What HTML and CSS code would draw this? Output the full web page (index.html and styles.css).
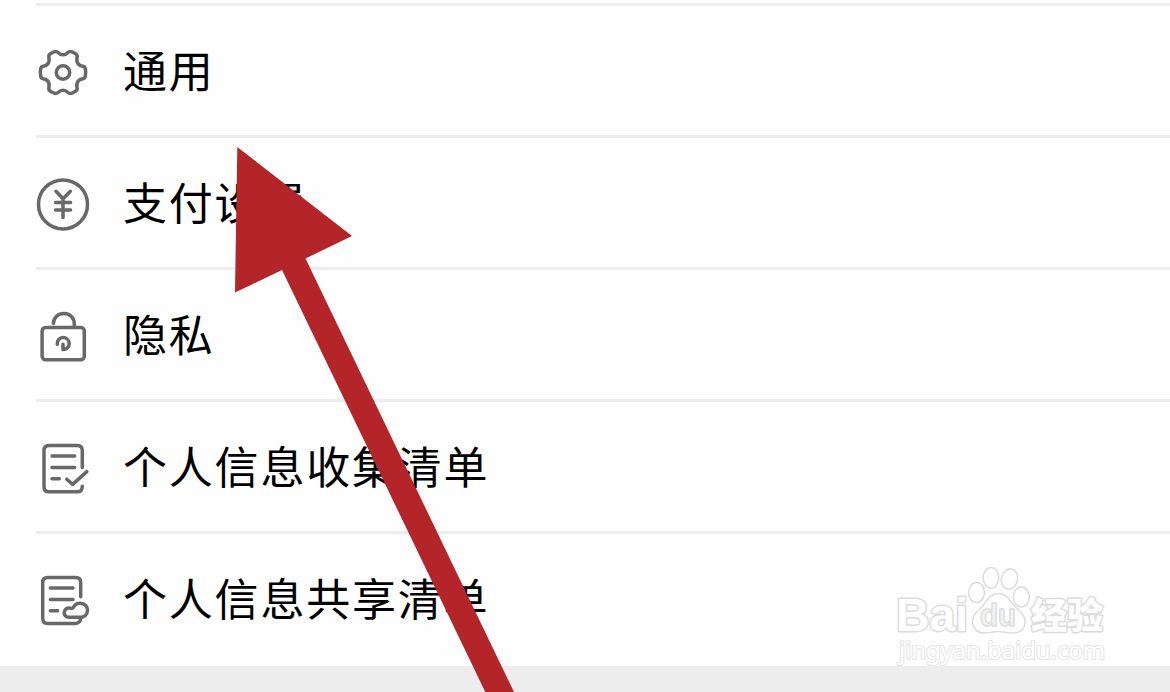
FILE: index.html
```html
<!DOCTYPE html>
<html lang="zh-CN">
<head>
    <meta charset="UTF-8">
    <meta name="viewport" content="width=device-width, initial-scale=1.0">
    <title>设置</title>
    <link rel="stylesheet" href="styles.css">
</head>
<body>
    <div class="page">
        <ul class="list">
            <li class="row">
                <svg class="icon" viewBox="0 0 60 60">
                    <path d="M31 12.8Q33.8 12.8 35.5 10.8Q37.8 8.7 40.3 10L43.6 11.8Q45.6 13 45.1 15.5Q44.1 19.5 46.3 22Q48.1 24 50.9 24.2Q52.9 24.5 53.3 26.7Q54.1 30.5 53.3 34.3Q52.9 36.5 50.9 36.8Q48.1 37 46.3 39Q44.1 41.5 45.1 45.5Q45.6 48 43.6 49.2L40.3 51Q37.8 52.3 35.5 50.2Q33.8 48.2 31 48.2Q28.2 48.2 26.5 50.2Q24.2 52.3 21.7 51L18.4 49.2Q16.4 48 16.9 45.5Q17.9 41.5 15.7 39Q13.9 37 11.1 36.8Q9.1 36.5 8.7 34.3Q7.9 30.5 8.7 26.7Q9.1 24.5 11.1 24.2Q13.9 24 15.7 22Q17.9 19.5 16.9 15.5Q16.4 13 18.4 11.8L21.7 10Q24.2 8.7 26.5 10.8Q28.2 12.8 31 12.8Z"/>
                    <circle cx="31" cy="30.5" r="6.7"/>
                </svg>
                <span class="label">通用</span>
            </li>
            <li class="row">
                <svg class="icon" viewBox="0 0 60 60">
                    <circle cx="31" cy="30.4" r="24.5"/>
                    <path d="M24 17.3L31 24.8L38.3 17.3M31 24.8V43.6M23.6 28.4H38.6M23.6 36H38.6"/>
                </svg>
                <span class="label">支付设置</span>
            </li>
            <li class="row">
                <svg class="icon" viewBox="0 0 60 60">
                    <rect x="10.1" y="21.4" width="42.2" height="32.4" rx="3.5"/>
                    <path d="M21.4 17.4C21.8 11.5 26 7.6 31.8 7.6C38 7.6 42.3 12 42.3 18V21"/>
                    <path d="M25.3 38.2C24.8 34.6 27.4 31.6 31 31.6C34.5 31.6 37.2 34.3 37.2 37.7C37.2 41.2 34.4 43.4 31 43.6V38.2"/>
                </svg>
                <span class="label">隐私</span>
            </li>
            <li class="row">
                <svg class="icon" viewBox="0 0 60 60">
                    <path d="M50.3 29.5V12.3Q50.3 7.4 45.3 7.4H17Q12 7.4 12 12.4V49Q12 53.8 17 53.8H45.5Q50.3 53.8 50.3 48.2"/>
                    <path d="M20 18H42.6M20 29.6H42.6M20 40.7H27.3M34.8 41.2L40.7 46.4L54.8 33.6"/>
                </svg>
                <span class="label">个人信息收集清单</span>
            </li>
            <li class="row">
                <svg class="icon" viewBox="0 0 60 60">
                    <path d="M48.7 26.7V12.3Q48.7 7.4 43.7 7.4H15.7Q10.7 7.4 10.7 12.4V48.4Q10.7 53.4 15.7 53.4H43.5Q48.4 53.4 48.7 48"/>
                    <path d="M18.4 18H41M18.4 29.5H41M18.4 40.7H25.6"/>
                    <path d="M37 47.3C33.5 47.3 32 44.8 32.2 42.2C32.5 39 35.4 37.3 38.2 38.2Q40.8 39 41.7 37C43 34.3 45.5 33 48.5 33.2C52.8 33.4 55.7 36.6 55.5 40.4C55.3 44.3 52.5 47.3 48.5 47.3Z"/>
                </svg>
                <span class="label">个人信息共享清单</span>
            </li>
        </ul>
        <div class="gap"></div>

        <svg class="watermark" viewBox="890 560 225 112">
            <g class="mark">
                <ellipse cx="976.5" cy="592.5" rx="8" ry="10"/>
                <ellipse cx="991" cy="577.8" rx="7.8" ry="10.3"/>
                <ellipse cx="1009.5" cy="579" rx="8" ry="10.3" transform="rotate(12 1009.5 579)"/>
                <ellipse cx="1021.3" cy="597" rx="8" ry="10"/>
                <path d="M998.5 593.5C1005 593.5 1009 598 1012 603C1016 609 1025 613 1025 622C1025 629 1020 633 1013 633C1007 633 1003 631.5 998 631.5C993 631.5 990 633 984 633C977 633 972.5 628 972.5 621C972.5 613 981 609 985 603C988 598 992 593.5 998.5 593.5Z"/>
            </g>
            <text class="brand" x="896" y="631" textLength="72" lengthAdjust="spacingAndGlyphs">Bai</text>
            <text class="du" x="980" y="626" textLength="36" lengthAdjust="spacingAndGlyphs">du</text>
            <text class="jy" x="1031" y="629" textLength="72" lengthAdjust="spacingAndGlyphs">经验</text>
            <text class="site" x="899" y="659" textLength="206" lengthAdjust="spacingAndGlyphs">jingyan.baidu.com</text>
        </svg>

        <svg class="arrow" viewBox="0 0 1170 692">
            <polygon points="237.3,147 352,236 305.5,258.5 514,692 485.3,692 282,270 235,292.5"/>
        </svg>
    </div>
</body>
</html>
```
FILE: styles.css
```css
body {
    margin: 0;
    background-color: #fefefe;
    font-family: "Noto Sans CJK SC", sans-serif;
    color: #000;
}
.page {
    position: relative;
    height: 692px;
    overflow: hidden;
    display: flex;
    flex-direction: column;
}
.list {
    list-style: none;
    margin: 0;
    padding: 3px 0 0 36px;
    height: 663px;
}
.row {
    display: flex;
    align-items: center;
    box-sizing: border-box;
    height: 132px;
    padding-top: 3px;
    border-top: 3px solid #ededed;
}
.icon {
    width: 60px;
    height: 60px;
    margin-left: -4px;
    flex: none;
    fill: none;
    stroke: #686868;
    stroke-width: 3.5;
    stroke-linecap: round;
    stroke-linejoin: round;
}
.label {
    margin-left: 31px;
    padding-bottom: 6px;
    font-size: 44px;
    line-height: 60px;
    letter-spacing: 1.8px;
    white-space: nowrap;
}
.gap {
    flex: 1;
    background-color: #ededed;
}
.watermark {
    position: absolute;
    left: 890px;
    top: 560px;
    width: 225px;
    height: 112px;
    fill: #fff;
    stroke: #dcdcdc;
    stroke-width: 1.5;
}
.watermark text {
    paint-order: stroke;
    stroke-width: 3;
    stroke-linejoin: round;
}
.watermark .brand {
    font: bold 46px "Liberation Sans", sans-serif;
}
.watermark .du {
    font: bold 31px "Liberation Sans", sans-serif;
    fill: #f4f4f4;
    paint-order: normal;
    stroke-width: 1.5;
}
.watermark .jy {
    font: 900 36px "Noto Sans CJK SC", sans-serif;
}
.watermark .site {
    font: 24px "Noto Sans", sans-serif;
    stroke: #e6e6e6;
    stroke-width: 2.2;
}
.arrow {
    position: absolute;
    left: 0;
    top: 0;
    width: 1170px;
    height: 692px;
    fill: #b32528;
}
```
